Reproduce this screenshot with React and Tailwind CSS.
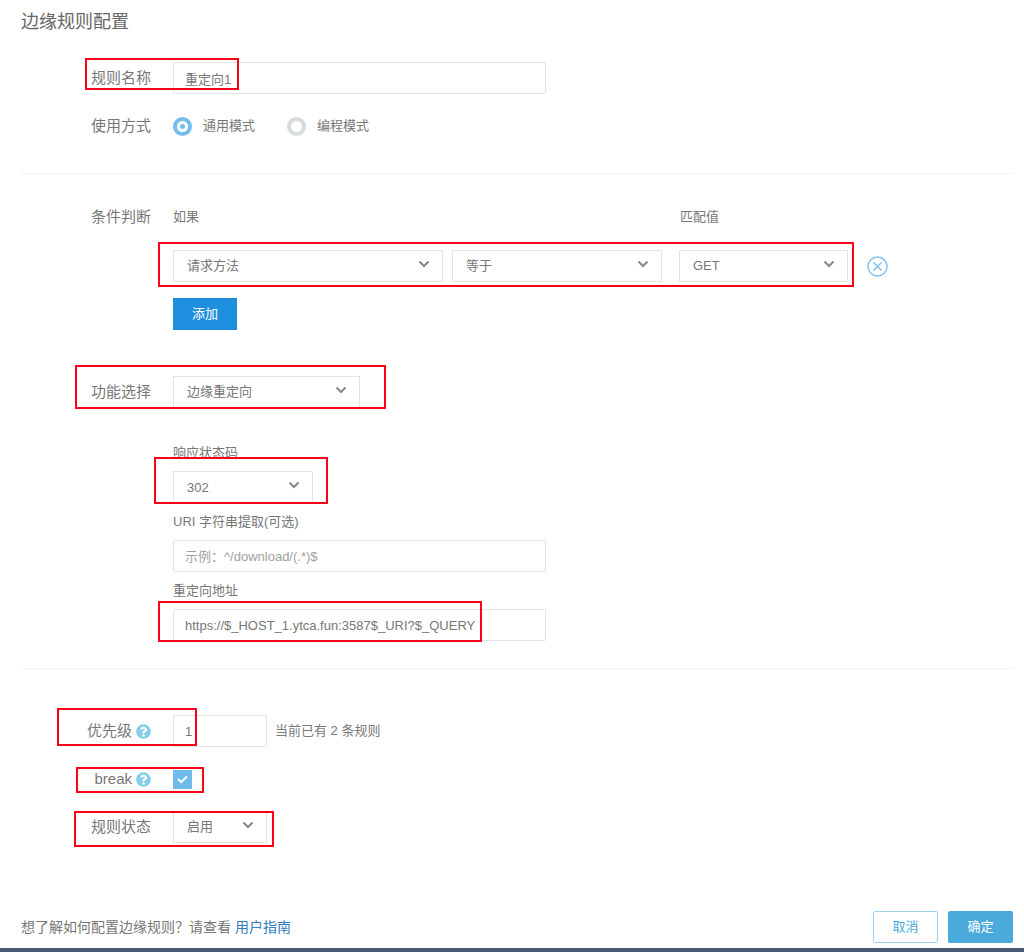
import { useState } from "react";
import { FaQuestionCircle } from "react-icons/fa";

/* ================= SHARED PIECES ================= */

function Mark({ className }) {
  return (
    <span
      aria-hidden="true"
      className={`absolute border-2 border-[#fb0019] pointer-events-none z-10 ${className}`}
    />
  );
}

function Row({ label, htmlFor, help, children }) {
  return (
    <div className="relative flex items-center gap-[22px]">
      <div className="w-[130px] shrink-0 flex items-center justify-end gap-1 text-[15px] leading-8">
        {htmlFor ? <label htmlFor={htmlFor}>{label}</label> : <span>{label}</span>}
        {help && (
          <FaQuestionCircle className="w-[15px] h-[15px] shrink-0 text-[#86cde8]" aria-hidden="true" />
        )}
      </div>
      {children}
    </div>
  );
}

function SelectBox({ id, label, options, className }) {
  return (
    <div className={`relative h-8 ${className}`}>
      <select
        id={id}
        aria-label={label}
        className="block appearance-none w-full h-8 pl-[13px] pr-9 bg-white border border-[#e3e3e3] text-[13px] outline-none"
      >
        {options.map((o) => (
          <option key={o}>{o}</option>
        ))}
      </select>
      <svg
        viewBox="0 0 12 8"
        className="absolute right-[13px] top-[10px] w-3 h-2 pointer-events-none"
        aria-hidden="true"
      >
        <path d="M1.500 1.500 6 6l4.500-4.500" fill="none" stroke="#888" strokeWidth="2" />
      </svg>
    </div>
  );
}

function TextBox({ className, ...props }) {
  return (
    <input
      type="text"
      className={`block h-8 px-[11px] bg-white border border-[#e2e2e2] rounded-xs text-[13px] outline-none placeholder:text-[#a0a0a0] ${className}`}
      {...props}
    />
  );
}

function ModeRadio({ value, mode, setMode, children }) {
  return (
    <label className="flex items-center gap-[11px] text-[13px]">
      <input
        type="radio"
        name="mode"
        value={value}
        checked={mode === value}
        onChange={() => setMode(value)}
        className="peer sr-only"
      />
      <span className="flex items-center justify-center w-[19px] h-[19px] rounded-full border-4 border-[#d8dbde] peer-checked:border-[#75bdec] peer-checked:*:bg-[#75bdec]">
        <span className="w-[5px] h-[5px] rounded-full" />
      </span>
      {children}
    </label>
  );
}

/* ================= PAGE ================= */

export default function App() {
  const [mode, setMode] = useState("common");
  const [name, setName] = useState("重定向1");
  const [target, setTarget] = useState("https://$_HOST_1.ytca.fun:3587$_URI?$_QUERY");
  const [priority, setPriority] = useState("1");
  const [isBreak, setIsBreak] = useState(true);

  return (
    <form
      onSubmit={(e) => e.preventDefault()}
      className="bg-white text-[#777] border-b-4 border-[#4a5a75] font-['Liberation_Sans','Noto_Sans_CJK_SC',sans-serif]"
    >
      <div className="pl-[21px] pr-[11px] pb-[5px]">
        <h1 className="pt-2 text-lg leading-7 text-[#666]">边缘规则配置</h1>

        {/* BASIC INFO */}
        <section className="mt-[26px] pb-[31px] flex flex-col gap-4 border-b border-[#f3f3f3]">
          <Row label="规则名称" htmlFor="name">
            <TextBox
              id="name"
              className="w-[373px]"
              value={name}
              onChange={(e) => setName(e.target.value)}
            />
            <Mark className="left-16 -top-1 w-[154px] h-8" />
          </Row>
          <Row label="使用方式">
            <div className="flex gap-8">
              <ModeRadio value="common" mode={mode} setMode={setMode}>
                通用模式
              </ModeRadio>
              <ModeRadio value="code" mode={mode} setMode={setMode}>
                编程模式
              </ModeRadio>
            </div>
          </Row>
        </section>

        {/* CONDITION + ACTION */}
        <section className="pt-[27px] pb-[27px] border-b border-[#f3f3f3]">
          <Row label="条件判断">
            <div className="flex text-[13px]">
              <span className="w-[507px]">如果</span>
              <span>匹配值</span>
            </div>
          </Row>

          <div className="mt-[17px] pl-[152px]">
            <div className="relative flex items-center">
              <SelectBox
                label="请求方法"
                className="w-[270px]"
                options={["请求方法", "请求 URI", "请求头"]}
              />
              <SelectBox
                label="等于"
                className="w-[210px] ml-[9px]"
                options={["等于", "不等于"]}
              />
              <SelectBox
                label="匹配值"
                className="w-[169px] ml-[17px]"
                options={["GET", "POST", "PUT"]}
              />
              <button type="button" aria-label="删除" className="ml-[19px]">
                <svg viewBox="0 0 21 21" className="block w-[21px] h-[21px]">
                  <g fill="none" stroke="#7fc2ef" strokeWidth="1.500">
                    <circle cx="10.500" cy="10.500" r="9.500" />
                    <path d="m6.500 6.500 8 8M14.500 6.500l-8 8" />
                  </g>
                </svg>
              </button>
              <Mark className="-left-[15px] -top-2 w-[696px] h-[45px]" />
            </div>
            <button
              type="button"
              className="block mt-4 w-16 h-8 bg-[#1e8fde] text-white text-[13px]"
            >
              添加
            </button>
          </div>

          <div className="mt-[46px]">
            <Row label="功能选择" htmlFor="action">
              <SelectBox
                id="action"
                className="w-[187px]"
                options={["边缘重定向", "缓存控制", "请求头改写"]}
              />
              <Mark className="left-[54px] -top-[11px] w-[311px] h-[44px]" />
            </Row>
          </div>

          <div className="mt-[34px] pl-[152px] flex flex-col gap-2 text-[13px] leading-[21px]">
            <label htmlFor="status">响应状态码</label>
            <div className="relative">
              <SelectBox id="status" className="w-[140px]" options={["302", "301", "307"]} />
              <Mark className="-left-[19px] -top-[14px] w-[174px] h-[47px]" />
            </div>
            <label htmlFor="uri">URI 字符串提取(可选)</label>
            <TextBox id="uri" className="w-[373px]" placeholder="示例：^/download/(.*)$" />
            <label htmlFor="target">重定向地址</label>
            <div className="relative">
              <TextBox
                id="target"
                className="w-[373px]"
                value={target}
                onChange={(e) => setTarget(e.target.value)}
              />
              <Mark className="-left-[15px] -top-2 w-[324px] h-[41px]" />
            </div>
          </div>
        </section>

        {/* PRIORITY / BREAK / STATE */}
        <section className="pt-[46px] flex flex-col gap-4">
          <Row label="优先级" htmlFor="priority" help>
            <div className="flex items-center gap-2 text-[13px]">
              <TextBox
                id="priority"
                className="w-[94px]"
                value={priority}
                onChange={(e) => setPriority(e.target.value)}
              />
              <span>当前已有 2 条规则</span>
            </div>
            <Mark className="left-9 -top-[7px] w-[140px] h-[38px]" />
          </Row>
          <Row label="break" htmlFor="break" help>
            <div className="relative w-[19px] h-[19px]">
              <input
                id="break"
                type="checkbox"
                checked={isBreak}
                onChange={(e) => setIsBreak(e.target.checked)}
                className="peer block appearance-none w-full h-full border border-[#d8dbde] checked:border-[#6fbcea] checked:bg-[#6fbcea]"
              />
              <svg
                viewBox="0 0 19 19"
                className="absolute inset-0 w-full h-full pointer-events-none hidden peer-checked:block"
                aria-hidden="true"
              >
                <path d="m5 9 3.200 3.200L14 6.500" fill="none" stroke="#fff" strokeWidth="2" />
              </svg>
            </div>
            <Mark className="left-[55px] top-1 w-[128px] h-[26px]" />
          </Row>
          <Row label="规则状态" htmlFor="state">
            <SelectBox id="state" className="w-[94px]" options={["启用", "停用"]} />
            <Mark className="left-[53px] top-0 w-[200px] h-9" />
          </Row>
        </section>

        {/* FOOTER */}
        <footer className="mt-[68px] flex items-center gap-[10px]">
          <p className="flex-1 text-sm">
            想了解如何配置边缘规则？请查看{" "}
            <a href="#guide" className="text-[#2f7cc0]">
              用户指南
            </a>
          </p>
          <button
            type="button"
            className="w-[65px] h-8 border border-[#9fd3ee] rounded-xs bg-white text-[#4aaadb] text-[13px]"
          >
            取消
          </button>
          <button
            type="submit"
            className="w-[65px] h-8 rounded-xs bg-[#4aaadb] text-white text-[13px]"
          >
            确定
          </button>
        </footer>
      </div>
    </form>
  );
}
